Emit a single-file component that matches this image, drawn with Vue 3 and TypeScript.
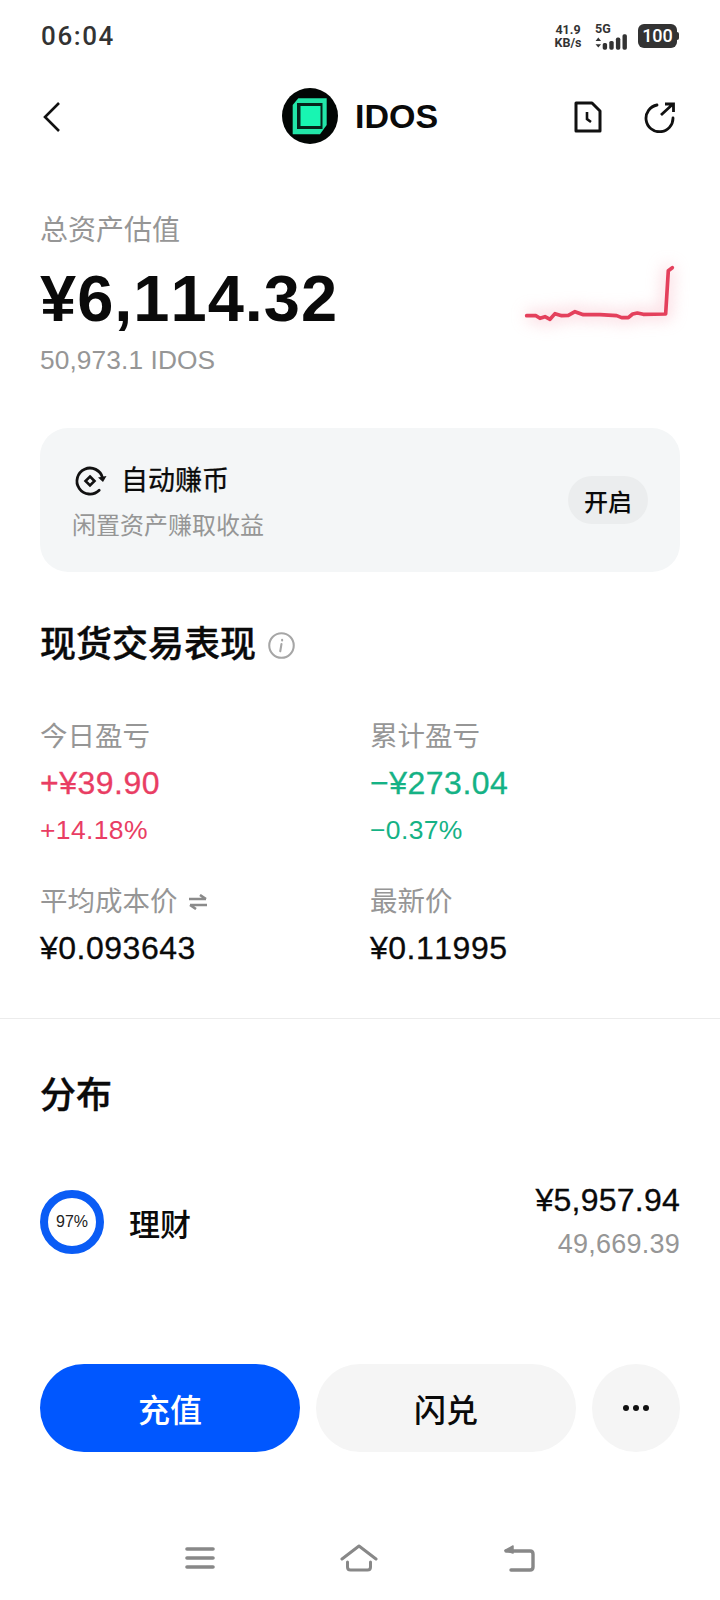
<script setup lang="ts">
const stats = [
  { label: '今日盈亏', value: '+¥39.90', pct: '+14.18%', tone: 'up' },
  { label: '累计盈亏', value: '−¥273.04', pct: '−0.37%', tone: 'down' },
]
const line = '80,227 108,227 120,235 135,230 150,238 165,221 185,227 205,226 225,215 250,224 300,224 350,227 365,233 385,233 398,222 412,219 430,223 497,222 505,92 517,83'
</script>

<template>
  <div class="page">
    <div class="status">
      <span class="time">06:04</span>
      <div class="status-right">
        <div class="speed"><span>41.9</span><span>KB/s</span></div>
        <div class="net">
          <span class="fiveg">5G</span>
          <svg class="signal" width="33" height="16" viewBox="0 0 30 14">
            <path d="M3 3 L5.5 6 H.5Z M3 12 L.5 9 H5.5Z" fill="#333" />
            <rect x="7" y="8" width="4" height="6" rx="1.5" fill="#333" />
            <rect x="13" y="6" width="4" height="8" rx="1.5" fill="#333" />
            <rect x="19" y="3" width="4" height="11" rx="1.5" fill="#333" />
            <rect x="25" y="0" width="4" height="14" rx="1.5" fill="#333" />
          </svg>
        </div>
        <div class="battery">100</div>
      </div>
    </div>

    <header class="nav">
      <svg class="back" width="20" height="32" viewBox="0 0 20 32" fill="none">
        <path d="M17 2 L3 16 L17 30" stroke="#111" stroke-width="2.6" />
      </svg>
      <div class="title">
        <svg width="56" height="56" viewBox="0 0 56 56">
          <circle cx="28" cy="28" r="28" fill="#020604" />
          <path d="M10.7 17 L16.3 10.3 H44.7 V37 L38 46.3 H10.7 Z" fill="#22e6a8" />
          <rect x="15" y="15" width="25.5" height="26" fill="#06231a" />
          <rect x="18.5" y="18" width="20" height="20" fill="#18f5b2" />
        </svg>
        <span>IDOS</span>
      </div>
      <div class="nav-actions">
        <svg width="28" height="32" viewBox="0 0 28 32" fill="none" stroke="#111" stroke-width="3">
          <path d="M2 2 H18 L26 10 V30 H2 Z" stroke-linejoin="round" />
          <path d="M13 11 V18 L17 21" stroke-width="2.6" />
        </svg>
        <svg width="32" height="32" viewBox="0 0 32 32" fill="none" stroke="#111" stroke-width="2.8">
          <path d="M13 4 A13.5 13.5 0 1 0 29 17" stroke-linecap="round" />
          <path d="M17 14 L29 3 M21 3 H29.5 V11" />
        </svg>
      </div>
    </header>

    <section class="hero">
      <div class="muted-label">总资产估值</div>
      <div class="total">¥6,114.32</div>
      <div class="amount">50,973.1 IDOS</div>
    </section>

    <section class="earn">
      <div class="earn-text">
        <div class="earn-title">
          <svg width="34" height="34" viewBox="0 0 34 34" fill="none" stroke="#111" stroke-width="2.8">
            <path d="M26.2 26.2 A13 13 0 1 1 29.6 14" stroke-linecap="round" />
            <path d="M25 13.5 L30 18 L33.5 12 Z" fill="#111" stroke="none" />
            <path d="M17 12.5 L21.5 17 L17 21.5 L12.5 17 Z" stroke-width="2.6" />
          </svg>
          <span>自动赚币</span>
        </div>
        <div class="earn-sub">闲置资产赚取收益</div>
      </div>
      <button class="pill">开启</button>
    </section>

    <h2 class="heading">
      现货交易表现
      <svg width="27" height="27" viewBox="0 0 26 26" fill="none">
        <circle cx="13" cy="13" r="11.8" stroke="#a6a6a6" stroke-width="2" />
        <path d="M13.6 7.5 V8.2 M13 11.5 L11.8 18.5" stroke="#a6a6a6" stroke-width="2" stroke-linecap="round" />
      </svg>
    </h2>

    <section class="grid">
      <div v-for="s in stats" :key="s.label" class="stat">
        <div class="muted-label small">{{ s.label }}</div>
        <div class="value" :class="s.tone">{{ s.value }}</div>
        <div class="pct" :class="s.tone">{{ s.pct }}</div>
      </div>
      <div class="stat">
        <div class="muted-label small with-icon">
          平均成本价
          <svg width="20" height="16" viewBox="0 0 20 16" fill="none" stroke="#8a8a8a" stroke-width="2.6">
            <path d="M1 5 H18 M12 1 L18 5 M19 11 H2 M8 15 L2 11" />
          </svg>
        </div>
        <div class="value plain">¥0.093643</div>
      </div>
      <div class="stat">
        <div class="muted-label small">最新价</div>
        <div class="value plain">¥0.11995</div>
      </div>
    </section>

    <hr class="rule" />

    <h2 class="heading dist">分布</h2>

    <section class="row">
      <div class="ring"><span>97%</span></div>
      <div class="row-name">理财</div>
      <div class="row-values">
        <div class="row-main">¥5,957.94</div>
        <div class="row-sub">49,669.39</div>
      </div>
    </section>

    <section class="actions">
      <button class="btn primary">充值</button>
      <button class="btn">闪兑</button>
      <button class="more" aria-label="更多"><i></i><i></i><i></i></button>
    </section>

    <nav class="sysbar">
      <svg width="30" height="24" viewBox="0 0 30 24" fill="none" stroke="#888" stroke-width="3.6" stroke-linecap="round">
        <path d="M2 3 H28 M2 12 H28 M2 21 H28" />
      </svg>
      <svg width="38" height="28" viewBox="0 0 38 28" fill="none" stroke="#888" stroke-width="3" stroke-linecap="round" stroke-linejoin="round">
        <path d="M2 15 L19 2 L36 15" />
        <path d="M7.5 18 V23 Q7.5 26 10.5 26 H27.5 Q30.5 26 30.5 23 V18" />
      </svg>
      <svg width="32" height="28" viewBox="0 0 32 28" fill="none" stroke="#888" stroke-width="3.4" stroke-linecap="round" stroke-linejoin="round">
        <path d="M3 7 H27 Q30 7 30 10 V23 Q30 26 27 26 H8" />
        <path d="M10 2 L2 6.5 L10 9 Z" fill="#888" stroke-width="1.5" />
      </svg>
    </nav>

    <svg class="spark-overlay" width="720" height="360" viewBox="0 0 720 360" fill="none" aria-hidden="true">
      <defs>
        <filter id="glow" filterUnits="userSpaceOnUse" x="0" y="-100" width="700" height="500"><feGaussianBlur stdDeviation="22" /></filter>
      </defs>
      <g transform="translate(500 240) scale(.3333)">
        <polyline :points="line" stroke="#f9c3cd" stroke-width="34" opacity=".6" filter="url(#glow)" />
        <polyline :points="line" stroke="#e4405c" stroke-width="11" stroke-linejoin="round" stroke-linecap="round" />
      </g>
    </svg>
  </div>
</template>

<style>
body { margin: 0; background: #fff; }
</style>

<style scoped>
.page {
  position: relative;
  width: 720px;
  height: 1600px;
  overflow: hidden;
  background: #fff;
  color: #0a0a0a;
  font-family: "Liberation Sans", "Noto Sans CJK SC", sans-serif;
  font-kerning: none;
}
.status {
  height: 72px;
  padding: 0 43px 0 41px;
  display: flex;
  align-items: center;
  justify-content: space-between;
  box-sizing: border-box;
}
.time { font: 500 26px "Roboto", sans-serif; letter-spacing: 1.6px; color: #333; }
.status-right { display: flex; align-items: center; color: #333; font-family: "Roboto", sans-serif; font-weight: 700; }
.speed { display: flex; flex-direction: column; align-items: center; font-size: 12.5px; line-height: 13px; width: 30px; margin-right: 12px; }
.net { display: flex; flex-direction: column; width: 37px; margin-right: 6px; }
.fiveg { font-size: 12.5px; line-height: 13px; }
.signal { display: block; margin-top: -1px; }
.battery {
  position: relative;
  width: 39px;
  height: 24px;
  border-radius: 6px;
  background: #333;
  color: #fff;
  font-size: 18px;
  font-weight: 500;
  line-height: 24px;
  text-align: center;
}
.battery::after {
  content: "";
  position: absolute;
  right: -2px;
  top: 8px;
  width: 2px;
  height: 8px;
  border-radius: 0 2px 2px 0;
  background: #333;
}
.nav {
  position: relative;
  height: 90px;
  padding: 0 44px 0 42px;
  display: flex;
  align-items: center;
  justify-content: space-between;
}
.title {
  position: absolute;
  left: 282px;
  top: 16px;
  display: flex;
  align-items: center;
  gap: 17px;
  font-size: 34px;
  font-weight: 700;
}
.nav-actions { display: flex; align-items: center; gap: 42px; }
.hero { height: 266px; padding: 49px 40px 0; box-sizing: border-box; }
.muted-label { color: #969696; font-size: 28px; line-height: 40px; }
.total { font-size: 65px; font-weight: 700; line-height: 82px; margin-top: 7px; letter-spacing: 1px; }
.amount { color: #969696; font-size: 26.3px; line-height: 36px; margin-top: 2px; letter-spacing: .1px; }
.spark-overlay { position: absolute; left: 0; top: 0; pointer-events: none; }
.earn {
  margin: 0 40px;
  height: 144px;
  padding: 0 32px;
  box-sizing: border-box;
  border-radius: 28px;
  background: #f4f6f7;
  display: flex;
  align-items: center;
  justify-content: space-between;
}
.earn-text { padding-top: 4px; }
.earn-title { display: flex; align-items: center; gap: 14px; font-size: 27px; line-height: 40px; font-weight: 400; -webkit-text-stroke: .3px currentColor; padding-left: 1px; }
.earn-sub { color: #969696; font-size: 24px; line-height: 36px; margin-top: 7px; }
.pill {
  width: 80px;
  height: 48px;
  border: 0;
  border-radius: 24px;
  background: #ebedee;
  color: #0a0a0a;
  font: 500 24px "Noto Sans CJK SC", sans-serif;
}
.heading {
  margin: 0;
  padding: 51px 40px 0;
  height: 44px;
  display: flex;
  align-items: center;
  gap: 12px;
  font-size: 36px;
  font-weight: 500;
  -webkit-text-stroke: .4px currentColor;
  line-height: 44px;
  box-sizing: content-box;
}
.grid {
  display: grid;
  grid-template-columns: 330px 1fr;
  padding: 50px 40px 0;
  row-gap: 34px;
}
.small { font-size: 27.5px; line-height: 40px; }
.with-icon { display: flex; align-items: center; gap: 10px; }
.value { font-size: 32px; line-height: 44px; margin-top: 4px; letter-spacing: .5px; -webkit-text-stroke: .3px currentColor; }
.plain { color: #0a0a0a; }
.pct { font-size: 26.5px; line-height: 36px; margin-top: 7px; letter-spacing: .35px; }
.up { color: #e93d63; }
.down { color: #15b285; }
.rule { border: 0; border-top: 1px solid #ececec; margin: 48px 0 0; }
.dist { padding-top: 55px; }
.row {
  display: flex;
  align-items: center;
  padding: 62px 40px 0;
}
.ring {
  width: 64px;
  height: 64px;
  border-radius: 50%;
  box-sizing: border-box;
  border: 8px solid #0a5cf5;
  display: flex;
  align-items: center;
  justify-content: center;
  font-size: 16px;
  color: #222;
}
.row-name { flex: 1; margin-left: 25px; font-size: 31px; font-weight: 500; }
.row-values { text-align: right; }
.row-main { font-size: 32px; line-height: 40px; letter-spacing: .25px; -webkit-text-stroke: .3px currentColor; }
.row-sub { color: #969696; font-size: 27px; line-height: 40px; margin-top: 4px; letter-spacing: .25px; }
.actions {
  display: flex;
  gap: 16px;
  padding: 0 40px;
  margin-top: 100px;
}
.btn {
  width: 260px;
  height: 88px;
  border: 0;
  border-radius: 44px;
  background: #f5f5f5;
  color: #0a0a0a;
  font: 500 32px "Noto Sans CJK SC", sans-serif;
}
.primary { background: #0057ff; color: #fff; }
.more {
  width: 88px;
  height: 88px;
  border: 0;
  border-radius: 50%;
  background: #f5f5f5;
  display: flex;
  align-items: center;
  justify-content: center;
  gap: 4px;
}
.more i { width: 6px; height: 6px; border-radius: 50%; background: #111; }
.sysbar {
  position: absolute;
  left: 0;
  right: 0;
  top: 1544px;
  display: flex;
  align-items: center;
  justify-content: center;
  gap: 125px;
}
</style>
